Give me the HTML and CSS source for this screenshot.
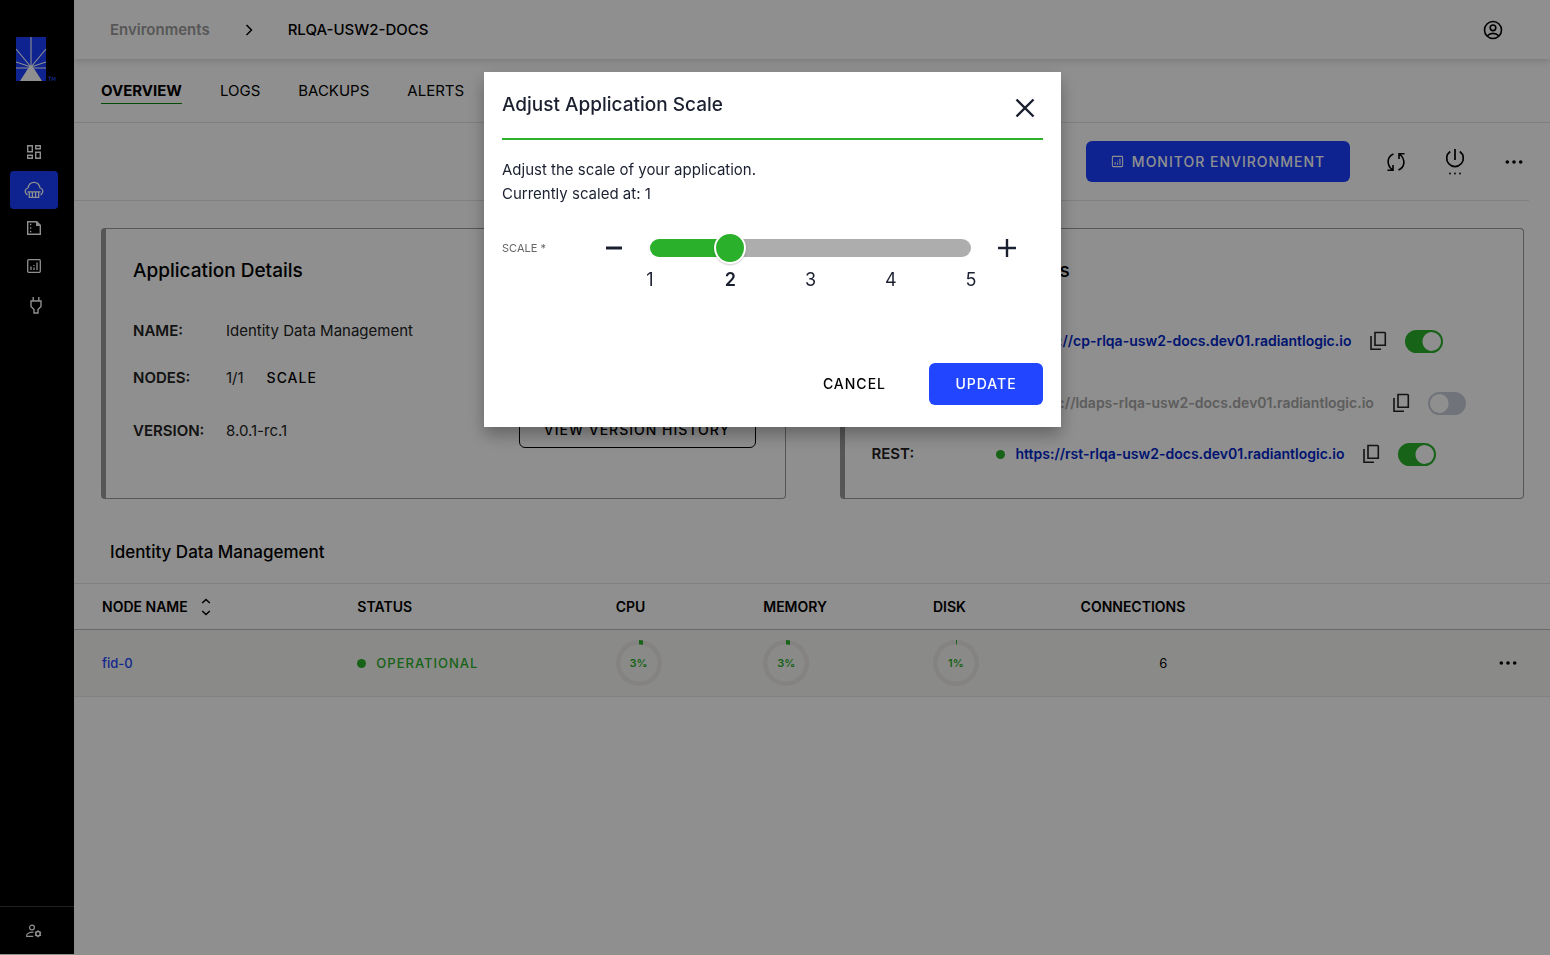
FILE: index.html
```html
<!DOCTYPE html>
<html lang="en">
<head>
<meta charset="utf-8">
<title>RLQA-USW2-DOCS - Overview</title>
<link rel="stylesheet" href="styles.css">
</head>
<body>
<svg class="sprite" aria-hidden="true">
  <symbol id="copy" viewBox="0 0 18 20"><path d="M6 1.500h9.500a.8.800 0 0 1 .8.800v12H6zM2 5v13.200h10" fill="none" stroke="currentColor" stroke-width="1.600"/></symbol>
  <symbol id="chart" viewBox="0 0 16 16"><rect x="1.7" y="1.7" width="12.6" height="12.6" rx="1" fill="none" stroke="currentColor" stroke-width="1.3"/><path d="M5 8.5V12M8 9.5V12M8 7v1M11 4.5V12" fill="none" stroke="currentColor" stroke-width="1.3"/></symbol>
  <symbol id="dots" viewBox="0 0 18 6"><circle cx="2.3" cy="3" r="1.8"/><circle cx="9" cy="3" r="1.8"/><circle cx="15.7" cy="3" r="1.8"/></symbol>
</svg>
<div class="app">
  <aside class="sidebar">
    <a class="logo" href="#" aria-label="Radiant Logic">
      <svg width="40" height="44" viewBox="0 0 40 44">
        <rect width="30" height="44" fill="#1a3fff"/>
        <path d="M15 0v30M0 12l15 18L30 12M0 25l15 5 15-5M0 31h30" fill="none" stroke="#fff" stroke-width="1.1"/>
        <path d="M15 28.500l3 3L26 44H4l8-12.500z" fill="#fff"/>
        <path d="M32 40h3M33.500 40v4M36 44v-4l1.500 3 1.500-3v4" fill="none" stroke="#2246ff" stroke-width=".8"/>
      </svg>
    </a>
    <nav class="side-nav">
      <a href="#" aria-label="Dashboard"><svg width="16" height="16" viewBox="0 0 16 16"><path d="M1.700 1.700h4.600v6H1.700zM9.700 1.700h4.600v3H9.700zM1.700 11.300h4.600v3H1.700zM9.700 8.300h4.600v6H9.700z" fill="none" stroke="currentColor" stroke-width="1.400"/></svg></a>
      <a class="active" href="#" aria-label="Environments"><svg width="20" height="18" viewBox="0 0 20 18"><path d="M3.600 13.500H2.800C.6 11.500.4 8 3.900 7 4.700 3.300 7 1.300 10 1.300s5.300 2 6.100 5.700c3.500 1 3.300 4.500 1.100 6.500h-.8M5.300 11.200v5.200h9.400v-5.200M3.500 10.800h13M8.400 11v5M11.600 11v5" fill="none" stroke="currentColor" stroke-width="1.300"/></svg></a>
      <a href="#" aria-label="Reports"><svg width="16" height="16" viewBox="0 0 16 16"><path d="M1.700 1.700h9l3.600 3.600v9H1.700z" fill="none" stroke="currentColor" stroke-width="1.400"/><path d="M10 1.500V6h4.500z" fill="currentColor"/><path d="M4 4.500h1.300M4 8h1.300M4 11.500h1.300" stroke="currentColor" stroke-width="1.300"/></svg></a>
      <a href="#" aria-label="Monitoring"><svg width="16" height="16"><use href="#chart"/></svg></a>
      <a class="plug" href="#" aria-label="Integrations"><svg width="14" height="18" viewBox="0 0 14 18"><path d="M4.200 1v4M9.800 1v4M2 5h10v5.500l-3 3V17H5v-3.500l-3-3z" fill="none" stroke="currentColor" stroke-width="1.400"/></svg></a>
    </nav>
    <a class="admin" href="#" aria-label="Administration"><svg width="18" height="16" viewBox="0 0 18 16"><circle cx="7" cy="4.500" r="2.400" fill="none" stroke="currentColor" stroke-width="1.200"/><path d="M8.500 9.200C5 9 1.700 10.500 1.700 12.200v1.200h6.500" fill="none" stroke="currentColor" stroke-width="1.200"/><circle cx="13" cy="10.800" r="2.200" fill="none" stroke="currentColor" stroke-width="1.500"/><path d="M13 7.300v1.500M13 12.800v1.500M9.900 9l1.500.8M14.600 11.800l1.500.8M16.100 9l-1.500.8M11.400 11.800l-1.500.8" stroke="currentColor" stroke-width="1.300"/></svg></a>
  </aside>

  <main class="main">
    <header class="topbar">
      <nav class="crumbs">
        <a href="#">Environments</a>
        <svg width="8" height="12" viewBox="0 0 8 12"><path d="M1.500 1l5 5-5 5" fill="none" stroke="currentColor" stroke-width="1.500"/></svg>
        <strong>RLQA-USW2-DOCS</strong>
      </nav>
      <button class="icon-button" aria-label="Account"><svg class="line" width="20" height="20" viewBox="0 0 20 20"><circle cx="10" cy="10" r="8.500"/><circle cx="10" cy="7.800" r="2.800"/><path d="M4.300 15.800c3-3.200 8.400-3.200 11.400 0"/></svg></button>
    </header>
    <nav class="tabs">
      <a class="current" href="#">OVERVIEW</a><a href="#">LOGS</a><a href="#">BACKUPS</a><a href="#">ALERTS</a>
    </nav>
    <div class="toolbar">
      <button class="primary monitor"><svg width="13" height="13"><use href="#chart"/></svg>MONITOR ENVIRONMENT</button>
      <button class="icon-button tool" aria-label="Refresh"><svg class="line" width="20" height="20" viewBox="0 0 20 20"><path d="M7.500 2C1 4.500.3 12.500 6 17.500M1.500 18.200H7v-5.200M12.500 18c6.500-2.500 7.200-10.500 1.500-15.500M18.500 1.800H13V7"/></svg></button>
      <button class="icon-button tool" aria-label="Power"><svg width="20" height="28" viewBox="0 0 20 28"><path d="M10 1v11M5.200 3.500a8.300 8.300 0 1 0 9.600 0" fill="none" stroke="currentColor" stroke-width="1.700"/><circle cx="5" cy="25.500" r=".9"/><circle cx="10" cy="25.500" r=".9"/><circle cx="15" cy="25.500" r=".9"/></svg></button>
      <button class="icon-button tool" aria-label="More actions"><svg width="18" height="6"><use href="#dots"/></svg></button>
    </div>

    <div class="cards">
      <section class="card">
        <h2>Application Details</h2>
        <dl class="details">
          <dt>NAME:</dt><dd>Identity Data Management</dd>
          <dt>NODES:</dt><dd>1/1 <button class="text-button">SCALE</button></dd>
          <dt>VERSION:</dt><dd class="version">8.0.1-rc.1 <button class="outline">VIEW VERSION HISTORY</button></dd>
        </dl>
      </section>
      <section class="card">
        <h2>Application Endpoints</h2>
        <div class="endpoints">
          <div class="endpoint first"><span class="name">CONTROL:</span><i class="dot"></i><a href="#">https://cp-rlqa-usw2-docs.dev01.radiantlogic.io</a><button class="copy" aria-label="Copy"><svg width="18" height="20"><use href="#copy"/></svg></button><input class="toggle" type="checkbox" role="switch" aria-label="Control panel endpoint" checked></div>
          <div class="endpoint second"><span class="name">LDAPS:</span><i class="dot"></i><a class="off" href="#">ldaps://ldaps-rlqa-usw2-docs.dev01.radiantlogic.io</a><button class="copy" aria-label="Copy"><svg width="18" height="20"><use href="#copy"/></svg></button><input class="toggle" type="checkbox" role="switch" aria-label="LDAPS endpoint"></div>
          <div class="endpoint"><span class="name">REST:</span><i class="dot"></i><a href="#">https://rst-rlqa-usw2-docs.dev01.radiantlogic.io</a><button class="copy" aria-label="Copy"><svg width="18" height="20"><use href="#copy"/></svg></button><input class="toggle" type="checkbox" role="switch" aria-label="REST endpoint" checked></div>
        </div>
      </section>
    </div>

    <h3>Identity Data Management</h3>
    <table class="nodes">
      <thead>
        <tr><th class="c-name"><span class="sort">NODE NAME <svg width="10" height="18" viewBox="0 0 10 18"><path d="M1.200 5L5 1.500 8.800 5M1.200 13L5 16.500 8.800 13" fill="none" stroke="currentColor" stroke-width="1.500"/></svg></span></th><th class="c-status">STATUS</th><th class="c-cpu">CPU</th><th class="c-memory">MEMORY</th><th class="c-cpu">DISK</th><th class="c-conn">CONNECTIONS</th><th></th></tr>
      </thead>
      <tbody>
        <tr>
          <td><a href="#">fid-0</a></td>
          <td><span class="status"><i class="dot"></i>OPERATIONAL</span></td>
          <td><div class="ring" style="--value:3"><span>3%</span></div></td>
          <td><div class="ring" style="--value:3"><span>3%</span></div></td>
          <td><div class="ring" style="--value:1"><span>1%</span></div></td>
          <td class="count">6</td>
          <td class="more"><button class="icon-button" aria-label="Node actions"><svg width="18" height="6"><use href="#dots"/></svg></button></td>
        </tr>
      </tbody>
    </table>
  </main>
</div>

<div class="backdrop">
  <div class="modal" role="dialog" aria-modal="true" aria-labelledby="modal-title">
    <header class="modal-head">
      <h1 id="modal-title">Adjust Application Scale</h1>
      <button class="icon-button close" aria-label="Close"><svg width="20" height="20" viewBox="0 0 20 20"><path d="M1.500 1.500l17 17M18.500 1.500l-17 17" stroke="currentColor" stroke-width="2.400"/></svg></button>
    </header>
    <p class="modal-text">Adjust the scale of your application.<br>Currently scaled at: 1</p>
    <div class="scale">
      <label for="scale">SCALE *</label>
      <button class="step" aria-label="Decrease"><svg width="18" height="18" viewBox="0 0 18 18"><path d="M1 9h16" stroke="currentColor" stroke-width="3"/></svg></button>
      <div class="slider">
        <div class="track"><input id="scale" type="range" min="1" max="5" value="2"></div>
        <div class="marks"><span>1</span><span class="selected">2</span><span>3</span><span>4</span><span>5</span></div>
      </div>
      <button class="step" aria-label="Increase"><svg width="18" height="18" viewBox="0 0 18 18"><path d="M0 9h18M9 0v18" stroke="currentColor" stroke-width="2.400"/></svg></button>
    </div>
    <footer class="modal-foot">
      <button class="text-button cancel">CANCEL</button>
      <button class="primary update">UPDATE</button>
    </footer>
  </div>
</div>
</body>
</html>
```
FILE: styles.css
```css
* { box-sizing: border-box; }

body {
  margin: 0;
  background: #fff;
  color: #1b2030;
  font: 400 15px/24px Inter, "Liberation Sans", sans-serif;
}

h1, h2, h3, p, dl, dd { margin: 0; }
a { color: inherit; text-decoration: none; }
button { font: inherit; color: inherit; border: 0; background: none; padding: 0; cursor: pointer; }
svg { display: block; fill: currentColor; }
.line { fill: none; stroke: currentColor; stroke-width: 1.6; }
.sprite { position: absolute; width: 0; height: 0; }

.app { display: flex; min-height: 100vh; }

/* Sidebar */
.sidebar {
  width: 74px;
  flex: none;
  margin-bottom: 1px;
  background: #000;
  color: #fff;
  display: flex;
  flex-direction: column;
}
.logo { padding: 37px 0 52px 16px; }
.side-nav { display: flex; flex-direction: column; padding-left: 10px; }
.side-nav a { width: 48px; height: 38px; border-radius: 4px; display: grid; place-items: center; }
.side-nav .active { background: #1a3fff; }
.side-nav .plug { padding: 2px 0 0 4px; }
.admin { margin-top: auto; height: 48px; border-top: 1px solid #3a3a3a; display: grid; align-items: center; padding-left: 25px; }

/* Page */
.main { flex: 1; min-width: 0; color: #000; }
.topbar {
  height: 59px;
  display: flex;
  align-items: center;
  justify-content: space-between;
  padding: 0 47px 0 36px;
  box-shadow: 0 2px 8px rgba(0, 0, 0, .16);
}
.crumbs { display: flex; align-items: center; gap: 35px; font-weight: 500; }
.crumbs a { color: #9b9b9b; font-weight: 600; }
.crumbs strong { font-weight: 500; }
.tabs {
  height: 64px;
  display: flex;
  align-items: center;
  gap: 38px;
  padding: 1px 27px 0;
  border-bottom: 1px solid #e2e2e2;
}
.tabs a { border-bottom: 1px solid transparent; }
.tabs .current { font-weight: 700; border-color: #0a8a0a; }

.toolbar {
  height: 78px;
  margin-right: 21px;
  display: flex;
  align-items: center;
  justify-content: flex-end;
  border-bottom: 1px solid #e2e2e2;
}
.primary {
  background: #2246ff;
  color: #fff;
  border-radius: 6px;
  height: 42px;
  font-weight: 500;
  font-size: 14px;
  letter-spacing: 1px;
}
.monitor { display: flex; align-items: center; justify-content: center; gap: 8px; width: 264px; height: 41px; margin-right: 16px; background: #1a3fff; }
.icon-button { display: grid; place-items: center; }
.tool { width: 59px; height: 40px; }
.tool:last-child { margin-right: -14px; }

.cards { display: grid; grid-template-columns: 1fr 1fr; gap: 54px; padding: 27px 26px 0 27px; }
.card {
  height: 271px;
  border: 1px solid #999;
  border-left-width: 5px;
  border-radius: 4px;
  padding: 30px 29px 0 27px;
}
.card h2 { font-size: 19px; font-weight: 500; }
.details { display: grid; grid-template-columns: 93px 1fr; margin-top: 36px; color: #222; }
.details dt { font-weight: 600; }
.details dd { display: flex; gap: 23px; }
.details dt, .details dd { height: 47px; }
.text-button { font-size: 14px; font-weight: 500; letter-spacing: 1px; height: 24px; color: #000; }
.details dt:last-of-type, .details .version { margin-top: 6px; }
.version { justify-content: space-between; }
.outline {
  width: 237px;
  height: 36px;
  margin-top: -7px;
  border: 1px solid #000;
  border-radius: 6px;
  color: #000;
  font-size: 14px;
  font-weight: 500;
  letter-spacing: 1px;
}
.endpoints { margin-top: 46px; }
.endpoint { display: flex; align-items: center; height: 24px; color: #222; }
.endpoint.first { margin-bottom: 38px; }
.endpoint.second { margin-bottom: 27px; }
.name { width: 124px; font-weight: 600; }
.first .name, .second .name { width: 132px; }
.endpoint a { color: #0026c8; font-size: 14px; font-weight: 600; margin-left: 11px; }
.endpoint .off { color: #a6a6a6; }
.dot { width: 9px; height: 9px; border-radius: 50%; background: #2ab02a; flex: none; }
.copy { margin: 0 18px; }
.toggle {
  appearance: none;
  margin: 0;
  width: 38px;
  height: 23px;
  border-radius: 12px;
  border: 2px solid #c8ced9;
  background: radial-gradient(circle at 9px 50%, #fff 9px, #c8ced9 10px);
}
.toggle:checked { border-color: #2ab02a; background: radial-gradient(circle at 25px 50%, #fff 9px, #2ab02a 10px); }

h3 { font-size: 17px; font-weight: 500; padding: 41px 36px 19px; }

.nodes { width: 100%; border-collapse: collapse; border-top: 1px solid #e2e2e2; table-layout: fixed; font-size: 13px; }
.nodes th { height: 46px; text-align: left; font-size: 14px; font-weight: 600; padding: 0 0 0 28px; border-bottom: 1px solid #bbb; }
.nodes td { height: 67px; padding: 0 0 0 28px; background: #f6f6f3; border-bottom: 1px solid #e6e8ec; }
.c-name { width: 17.3%; }
.c-status { width: 17.5%; }
.c-cpu { width: 10%; }
.c-memory { width: 11.5%; }
.c-conn { width: 13.1%; }
.sort { display: flex; align-items: center; gap: 13px; }
.nodes td a { color: #2246ff; font-weight: 500; }
.status { display: flex; align-items: center; gap: 10px; color: #2ab02a; font-weight: 500; letter-spacing: 1px; }
.nodes .count { text-align: center; }
.nodes .more { padding-right: 33px; }
.more .icon-button { margin-left: auto; }
.ring {
  width: 46px;
  height: 46px;
  border-radius: 50%;
  display: grid;
  place-items: center;
  background:
    radial-gradient(circle, #f6f6f3 18px, transparent 19px),
    conic-gradient(#2ab02a calc(var(--value) * 1%), #ebe9e6 0);
}
.ring span { font-size: 11px; font-weight: 600; color: #2ab02a; }

/* Scale dialog */
.backdrop {
  position: fixed;
  inset: 0;
  background: rgba(0, 0, 0, .44);
  display: flex;
  justify-content: center;
  align-items: flex-start;
  padding: 72px 5px 0 0;
}
.modal { width: 577px; background: #fff; padding: 0 18px 22px; box-shadow: 0 8px 16px rgba(0, 0, 0, .3); }
.modal-head { height: 68px; display: flex; align-items: center; justify-content: space-between; border-bottom: 2px solid #2ab02a; }
.modal-head h1 { font-size: 19px; font-weight: 500; }
.close { padding: 6px 8px 0 0; }
.modal-text { padding: 18px 0 30px; }
.scale { display: flex; align-items: flex-start; padding-right: 16px; }
.scale label { width: 92px; font-size: 11px; color: #666; }
.step { width: 40px; height: 24px; display: grid; place-items: center; }
.slider { flex: 1; margin: 3px 16px 0; }
.track { height: 18px; border-radius: 9px; background: linear-gradient(90deg, #2ab02a 25%, #adadad 25%); }
.track input {
  appearance: none;
  display: block;
  width: calc(100% + 32px);
  height: 18px;
  margin: 0 -16px;
  background: none;
}
.track input::-webkit-slider-thumb {
  appearance: none;
  width: 32px;
  height: 32px;
  border: 2px solid #fff;
  border-radius: 50%;
  background: #2ab02a;
  box-shadow: 0 1px 2px rgba(0, 0, 0, .2);
}
.marks { display: flex; justify-content: space-between; margin: 11px -10px 0; font-size: 18px; }
.marks span { width: 20px; text-align: center; }
.marks .selected { font-weight: 600; }
.modal-foot { display: flex; justify-content: flex-end; align-items: center; gap: 43px; margin-top: 71px; }
.update { width: 114px; }
```
